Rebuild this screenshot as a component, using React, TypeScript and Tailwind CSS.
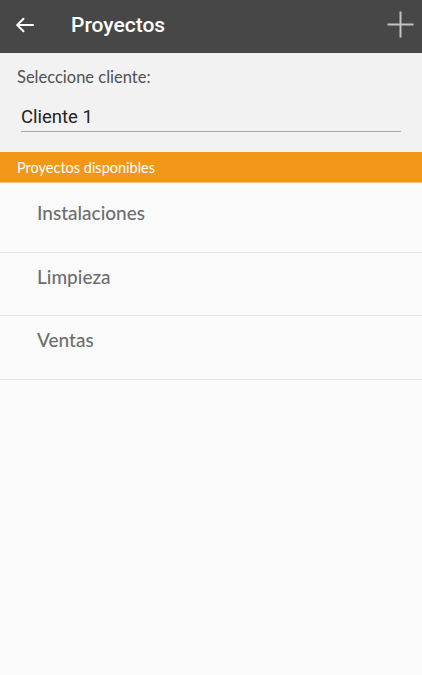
const proyectos = ["Instalaciones", "Limpieza", "Ventas"]

export default function App() {
  return (
    <div className="w-[422px] h-[675px] flex flex-col bg-[#fafafa] overflow-hidden" style={{ fontFamily: "Lato, 'Noto Sans', sans-serif" }}>
      {/* Toolbar */}
      <header className="h-[53px] shrink-0 bg-[#474747] flex items-center pl-[15px] pr-[8px] pb-[4px]">
        <svg className="w-[19px] h-[16px]" viewBox="0 0 19 16" fill="none">
          <path d="M18 8H2.5M8.5 1.8L2.2 8L8.5 14.2" stroke="#fff" strokeWidth="2" strokeLinecap="round" strokeLinejoin="round" />
        </svg>
        <h1 className="ml-[37px] text-[21px] font-medium text-white font-['Roboto',sans-serif] leading-none pt-[2px]">Proyectos</h1>
        <svg className="ml-auto w-[27px] h-[27px]" viewBox="0 0 27 27" fill="none">
          <path d="M13.5 0.5V26.5M0.5 13.5H26.5" stroke="#c4c4c4" strokeWidth="2" />
        </svg>
      </header>

      {/* Selector de cliente */}
      <section className="bg-[#f2f2f2] h-[99px] shrink-0 px-[17px] pt-[13px]">
        <p className="text-[16.5px] text-[#505050] leading-[22px]">Seleccione cliente:</p>
        <div className="mt-[17px] ml-[4px] mr-[4px] border-b-[1.5px] border-[#a8a8a8] pb-[2px]">
          <span className="text-[18.5px] text-[#222] font-['Roboto',sans-serif] leading-[24px]">Cliente 1</span>
        </div>
      </section>

      {/* Cabecera de lista */}
      <div className="h-[31px] shrink-0 bg-[#f39719] flex items-center px-[17px] pt-[2px] border-b-[1.5px] border-[#f8c27a]">
        <span className="text-[14.5px] text-white leading-none">Proyectos disponibles</span>
      </div>

      {/* Lista */}
      <ul className="pt-[6px]">
        {proyectos.map((p) => (
          <li key={p} className="h-[63.5px] border-b border-[#e6e6e6] pl-[37px] pt-[13px]">
            <span className="text-[19px] font-medium text-[#6e6e6e] leading-[22px]">{p}</span>
          </li>
        ))}
      </ul>
    </div>
  )
}
